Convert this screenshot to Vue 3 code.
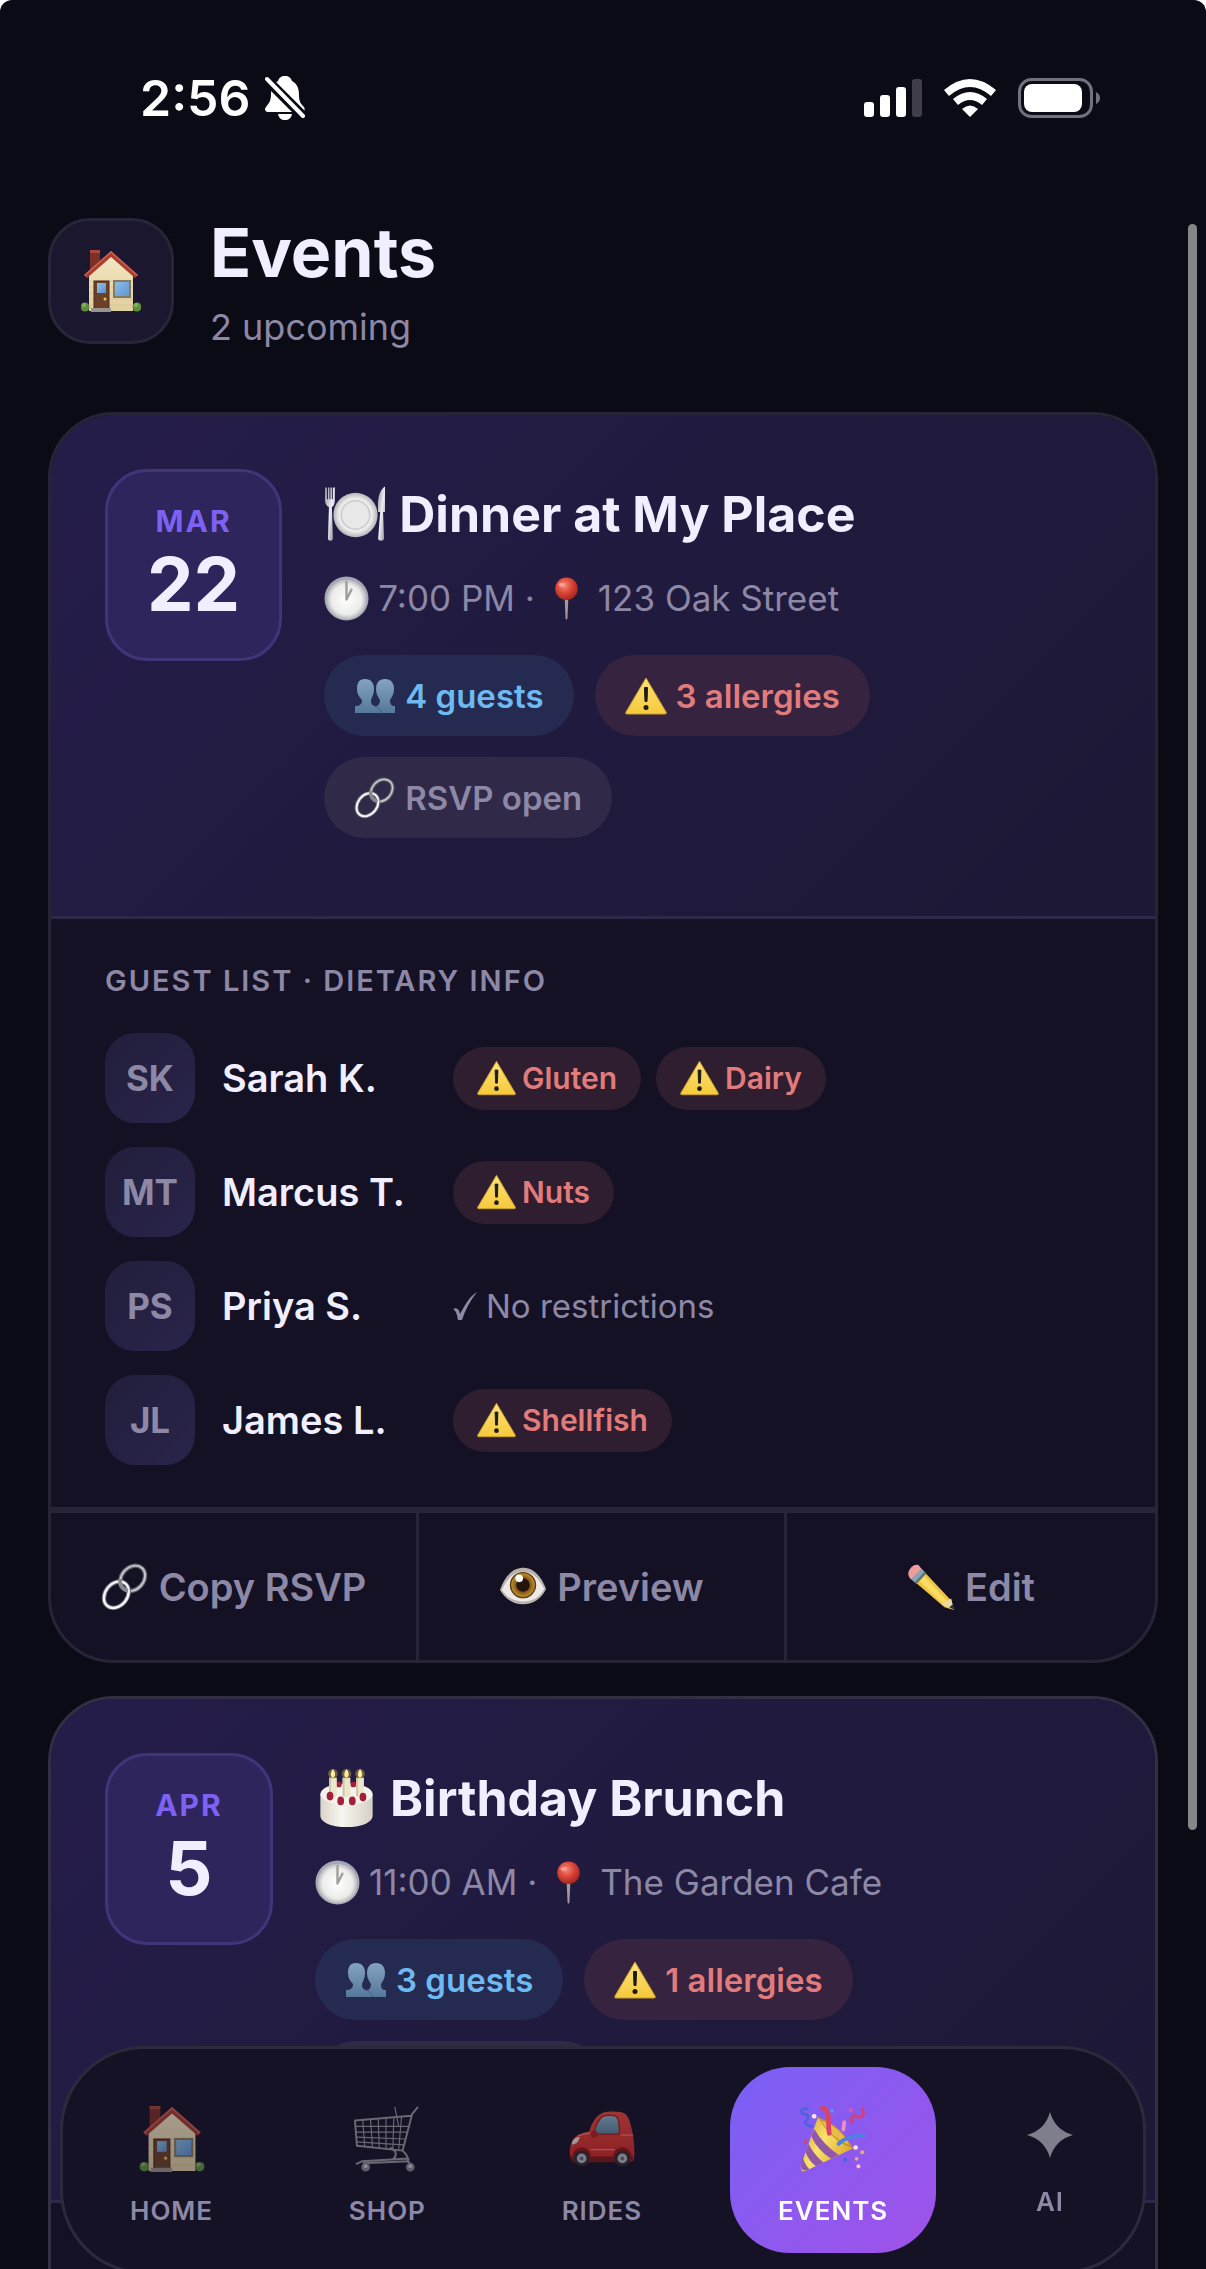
<template>
    <div class="phone">
        <svg class="defs" aria-hidden="true">
            <defs>
                <linearGradient id="g-wall" x1="0" y1="0" x2="0" y2="1">
                    <stop offset="0" stop-color="#f3e6c2" />
                    <stop offset="1" stop-color="#e2cf9f" />
                </linearGradient>
                <linearGradient id="g-glass" x1="0" y1="0" x2="1" y2="1">
                    <stop offset="0" stop-color="#8fc0e8" />
                    <stop offset="1" stop-color="#5b93cf" />
                </linearGradient>
                <linearGradient id="g-warn" x1="0" y1="0" x2="0" y2="1">
                    <stop offset="0" stop-color="#fbe27c" />
                    <stop offset="1" stop-color="#f6c93a" />
                </linearGradient>
                <linearGradient id="g-steel" x1="0" y1="0" x2="1" y2="1">
                    <stop offset="0" stop-color="#8c9099" />
                    <stop offset="0.5" stop-color="#eceef2" />
                    <stop offset="1" stop-color="#858992" />
                </linearGradient>
                <linearGradient id="g-people" x1="0" y1="0" x2="0" y2="1">
                    <stop offset="0" stop-color="#84a3bf" />
                    <stop offset="1" stop-color="#56789a" />
                </linearGradient>
                <radialGradient id="g-dial">
                    <stop offset="0" stop-color="#ffffff" />
                    <stop offset="0.75" stop-color="#ececea" />
                    <stop offset="1" stop-color="#b4b5ba" />
                </radialGradient>
                <radialGradient id="g-pin" cx="0.4" cy="0.35" r="0.7">
                    <stop offset="0" stop-color="#f58c7c" />
                    <stop offset="0.5" stop-color="#da4437" />
                    <stop offset="1" stop-color="#9d231c" />
                </radialGradient>
                <radialGradient id="g-iris">
                    <stop offset="0" stop-color="#5a3510" />
                    <stop offset="0.6" stop-color="#8a5a1a" />
                    <stop offset="1" stop-color="#c59a35" />
                </radialGradient>
                <linearGradient id="g-cake" x1="0" y1="0" x2="1" y2="0">
                    <stop offset="0" stop-color="#d9d4c8" />
                    <stop offset="0.4" stop-color="#f8f6f0" />
                    <stop offset="1" stop-color="#d5d0c3" />
                </linearGradient>
                <linearGradient id="g-car" x1="0" y1="0" x2="0" y2="1">
                    <stop offset="0" stop-color="#e5493e" />
                    <stop offset="1" stop-color="#cf2620" />
                </linearGradient>
                <linearGradient id="g-window" x1="0" y1="0" x2="0" y2="1">
                    <stop offset="0" stop-color="#8fb4c8" />
                    <stop offset="1" stop-color="#5d8399" />
                </linearGradient>
                <linearGradient id="g-cone" x1="0" y1="0" x2="1" y2="0.6">
                    <stop offset="0" stop-color="#c9972b" />
                    <stop offset="0.5" stop-color="#fbe36b" />
                    <stop offset="1" stop-color="#d9a72c" />
                </linearGradient>
            </defs>

            <symbol id="i-house" viewBox="0 0 60 62">
                <path d="M9 0h10v14L9 24z" fill="#7c2f25" />
                <path d="M9 0h10v3H9z" fill="#a8473a" />
                <path d="M8 25 30 4l22 21v36H8z" fill="url(#g-wall)" />
                <path d="M8 31h44M8 37h44M8 43h44M8 49h44M8 55h44" stroke="#d2c094" stroke-width="0.6" />
                <path d="M30 1 57 25l-3 3L30 7 6 28l-3-3z" fill="#a83d31" />
                <path d="M30 1 57 25l-1 1L30 3 4 26l-1-1z" fill="#cf6150" />
                <rect x="13" y="31" width="15" height="28" fill="#6b4027" stroke="#4a2a18" />
                <rect x="16" y="33" width="9" height="10" fill="url(#g-glass)" />
                <circle cx="24" cy="49" r="1.5" fill="#f0bf55" />
                <rect x="33" y="31" width="16" height="16" fill="url(#g-glass)" stroke="#857b5e" stroke-width="2" />
                <path d="M10 58h20v4H10z" fill="#9a9290" />
                <circle cx="4" cy="57" r="4.5" fill="#5f8f3d" />
                <circle cx="56" cy="57" r="4.5" fill="#5f8f3d" />
                <circle cx="3" cy="55" r="2" fill="#86b45a" />
                <circle cx="55" cy="55" r="2" fill="#86b45a" />
            </symbol>

            <symbol id="i-plate" viewBox="0 0 64 56">
                <path d="M1 1v13c0 4 2 6 4 7L4 53c0 3 5 3 5 0L8 21c2-1 3-3 3-7V1" fill="url(#g-steel)" />
                <path d="M3.500 0v13M6 0v13M8.500 0v13" stroke="#211b42" stroke-width="1" />
                <circle cx="32" cy="29" r="22.500" fill="url(#g-dial)" />
                <circle cx="32" cy="29" r="14.500" fill="#e8e8e8" stroke="#cbcbd0" stroke-width="1.500" />
                <path d="M62 0c-6 4-8 12-7 26h2l-2 27c0 3 6 3 6 0l-1-27h2z" fill="url(#g-steel)" />
            </symbol>

            <symbol id="i-cake" viewBox="0 0 60 62">
                <path d="M3 27v22c0 16 54 16 54 0V27z" fill="url(#g-cake)" />
                <ellipse cx="30" cy="27" rx="27" ry="11" fill="#f5f3ed" />
                <circle cx="22" cy="17" r="3" fill="#a51f38" />
                <circle cx="37" cy="17" r="3" fill="#a51f38" />
                <path d="M12 10h8v19c-2 2-6 2-8 0zM26 10h8v19c-2 2-6 2-8 0zM40 10h8v19c-2 2-6 2-8 0z" fill="#ece6cc" />
                <path d="M12 10h2v19h-2zM26 10h2v19h-2zM40 10h2v19h-2z" fill="#cdc5a4" />
                <g fill="#b8a33e">
                    <circle cx="16" cy="6" r="5" opacity="0.5" />
                    <circle cx="30" cy="6" r="5" opacity="0.5" />
                    <circle cx="44" cy="6" r="5" opacity="0.5" />
                </g>
                <path d="M16 1c3 4 3 8 0 9-3-1-3-5 0-9zM30 1c3 4 3 8 0 9-3-1-3-5 0-9zM44 1c3 4 3 8 0 9-3-1-3-5 0-9z" fill="#fdeea0" />
                <g fill="#a51f38">
                    <ellipse cx="13" cy="29" rx="3.500" ry="4.500" />
                    <ellipse cx="24" cy="34" rx="3.500" ry="4.500" />
                    <ellipse cx="36" cy="34" rx="3.500" ry="4.500" />
                    <ellipse cx="47" cy="30" rx="3.500" ry="4.500" />
                </g>
            </symbol>

            <symbol id="i-clock" viewBox="0 0 46 46">
                <circle cx="23" cy="23" r="22.500" fill="#a3a7b4" />
                <circle cx="23" cy="24" r="20.500" fill="url(#g-dial)" />
                <path d="M23 6v18l5-10" fill="none" stroke="#a0a19f" stroke-width="2.500" stroke-linecap="round" stroke-linejoin="round" />
            </symbol>

            <symbol id="i-pin" viewBox="0 0 46 46">
                <path d="M21 20h4l-1 23c0 2-2 2-2 0z" fill="#a59791" />
                <circle cx="23" cy="13" r="11.500" fill="url(#g-pin)" />
                <ellipse cx="18" cy="9" rx="3" ry="2" fill="#fbb5a8" opacity="0.7" />
            </symbol>

            <symbol id="i-people" viewBox="0 0 42 42">
                <g fill="url(#g-people)">
                    <path d="M11 4c6 0 9 4 9 10 0 5-2 8-3 11 0 4 1 6 6 6v7H1v-7c5 0 7-2 7-6-3-3-5-6-5-11C3 8 5 4 11 4z" />
                    <path d="M31 4c6 0 9 4 9 10 0 5-2 8-4 11 0 4 1 6 5 6v7H20v-5c4-2 6-4 6-8-2-3-4-6-4-11 0-6 3-10 9-10z" />
                </g>
                <path d="M20 31c4 1 6 3 8 7" fill="none" stroke="#435e7c" stroke-width="1" />
            </symbol>

            <symbol id="i-warn" viewBox="0 0 42 38">
                <path d="M21 1 41 35q1 2-1 2H2q-2 0-1-2z" fill="url(#g-warn)" stroke="#caa02b" stroke-width="1" stroke-linejoin="round" />
                <path d="M19.500 10.500h3l-0.500 14h-2z" fill="#1d1a12" stroke="#1d1a12" stroke-linejoin="round" />
                <circle cx="21" cy="30.500" r="2.500" fill="#1d1a12" />
            </symbol>

            <symbol id="i-link" viewBox="0 0 50 50">
                <g fill="none">
                    <ellipse cx="33" cy="16" rx="11.500" ry="14.500" transform="rotate(42 33 16)" stroke="#62656c" stroke-width="4.500" />
                    <ellipse cx="33" cy="16" rx="11.500" ry="14.500" transform="rotate(42 33 16)" stroke="#c3c6cc" stroke-width="2" />
                    <ellipse cx="16" cy="33" rx="11.500" ry="15" transform="rotate(38 16 33)" stroke="#6d7078" stroke-width="4.500" />
                    <ellipse cx="16" cy="33" rx="11.500" ry="15" transform="rotate(38 16 33)" stroke="#f2f4f8" stroke-width="2.500" />
                    <path d="M20 17c-1 6 2 10 8 12" stroke="#84878f" stroke-width="4" />
                </g>
            </symbol>

            <symbol id="i-eye" viewBox="0 0 50 50">
                <path d="M1 28C7 12 15 5 26 5c10 0 18 9 23 22-5 10-13 16-24 16C13 43 6 36 1 28z" fill="#b9b3ae" />
                <path d="M3 28C9 15 16 9 26 9c9 0 16 7 21 18-5 9-12 13-22 13C14 40 8 35 3 28z" fill="#eeeae6" />
                <circle cx="25" cy="23" r="13" fill="url(#g-iris)" />
                <circle cx="25" cy="23" r="13" fill="none" stroke="#5d3d12" stroke-width="1.500" />
                <circle cx="25" cy="23" r="7" fill="#24140b" />
                <circle cx="21" cy="16" r="4" fill="#fff" />
            </symbol>

            <symbol id="i-pencil" viewBox="0 0 50 50">
                <path d="M3 15 15 6l31 33 3 10-10-3z" fill="#f0c43c" />
                <path d="m9 15 6-5 29 32-4 3z" fill="#f9dc63" />
                <path d="M3 16 10 22 20 11 14 5z" fill="#8aa4b4" />
                <path d="M8 20 10 22 20 11 18 9z" fill="#5e7480" />
                <path d="M2 14C-1 9 6 0 12 2l3 4L4 17z" fill="#ee9d9a" />
                <path d="m36 43 10-6 3 12z" fill="#eed9a5" />
                <path d="m44 46 4-3 1 6z" fill="#2f2f33" />
            </symbol>

            <symbol id="i-cart" viewBox="0 0 66 68">
                <g fill="none" stroke="#96969e" stroke-width="1.200" stroke-linejoin="round">
                    <path d="M65 1 59 8 49 46 2 41 0 15l58-5" stroke-width="2" />
                    <path d="M1 21h55M1 27h53M2 32l50 2M2 37l48 3" />
                    <path d="m8 14 2 28M16 14l2 28M24 13l1 30M32 12v32M40 12l-1 33M48 11l-3 34M41 1l4 20" />
                    <path d="M36 43c8 3 7 9 3 12M49 46c6 5 6 8 5 11l5 4M1 60l6-3 48-3v3L8 59" stroke-width="2" />
                </g>
                <circle cx="11" cy="63" r="4.500" fill="#84848c" />
                <circle cx="57" cy="63" r="4.500" fill="#84848c" />
                <circle cx="11" cy="62" r="2" fill="#d0d0d4" />
                <circle cx="57" cy="62" r="2" fill="#d0d0d4" />
            </symbol>

            <symbol id="i-car" viewBox="0 0 68 68">
                <path d="M1 50c-1-8 2-16 8-20 4-2 8-3 12-4 2-7 5-14 12-18 4-3 20-3 25 0 5 5 6 13 8 22 1 8 2 18 1 24q0 3-3 3H6q-5-2-5-7z" fill="url(#g-car)" />
                <path d="M26 27c1-6 4-12 8-16 4-2 12-2 15 0 3 3 3 9 3 15 0 2-1 3-3 3H28q-3 0-2-2z" fill="url(#g-window)" stroke="#a91f1b" stroke-width="1.500" />
                <circle cx="26" cy="29" r="3.500" fill="#b3211c" />
                <path d="M9 31c5-2 9-3 13-3M54 30h12" fill="none" stroke="#f0766b" stroke-width="1.500" />
                <path d="M22 45h25" stroke="#f0766b" stroke-width="1.500" />
                <path d="M3 38c1-4 4-6 8-6-1 5-3 7-8 8z" fill="#f1d8d4" />
                <path d="M1 52h65v4q-1 2-4 2H5q-4-2-4-6z" fill="#7e1714" />
                <g>
                    <circle cx="13" cy="52" r="9.500" fill="#8f1714" />
                    <circle cx="55" cy="52" r="9.500" fill="#8f1714" />
                    <circle cx="13" cy="54" r="8" fill="#2d2d31" />
                    <circle cx="55" cy="54" r="8" fill="#2d2d31" />
                    <circle cx="13" cy="54" r="5" fill="#b5b7bd" />
                    <circle cx="55" cy="54" r="5" fill="#b5b7bd" />
                    <circle cx="13" cy="54" r="2" fill="#6b6d73" />
                    <circle cx="55" cy="54" r="2" fill="#6b6d73" />
                </g>
            </symbol>

            <symbol id="i-party" viewBox="0 0 70 70">
                <path d="M19 12Q40 24 56 45L8 68q-8 4-7-5z" fill="url(#g-cone)" />
                <path d="M15 24q9 16 26 28l-8 4Q18 46 12 32zM9 40q6 12 16 20l-8 4Q9 58 6 49zM3 55q2 7 7 12-9 4-9-4z" fill="#9258a8" />
                <path d="M19 12q24 8 37 33Q34 38 19 12z" fill="#c99322" />
                <path d="M22 15q22 8 30 26Q33 34 22 15z" fill="#e8bc45" />
                <path d="M31 29C29 18 33 5 24 2" fill="none" stroke="#dc4264" stroke-width="5" stroke-linecap="round" />
                <path d="M41 40c8-7 16-9 27-8" fill="none" stroke="#4a83e0" stroke-width="4" stroke-linecap="round" />
                <path d="M8 3C0 1 0 9 5 9s5 4 1 7 4 5 7 6" fill="none" stroke="#4466d8" stroke-width="2.500" stroke-linecap="round" />
                <path d="M66 3c4 8-3 11-6 8s-8 2-4 7" fill="none" stroke="#d0407c" stroke-width="3" stroke-linecap="round" />
                <path d="m47 17-1 8" stroke="#ee8ec0" stroke-width="4" stroke-linecap="round" />
                <circle cx="15" cy="11" r="2.500" fill="#fbe6ec" />
                <circle cx="34" cy="5" r="2" fill="#5599f0" />
                <circle cx="54" cy="4" r="2" fill="#e05a9e" />
                <circle cx="59" cy="44" r="2.500" fill="#fbe6d8" />
                <circle cx="66" cy="49" r="2.200" fill="#e8a878" />
                <circle cx="60" cy="56" r="2" fill="#e8a878" />
                <circle cx="62" cy="64" r="2.200" fill="#f6bcd4" />
                <circle cx="48" cy="57" r="2" fill="#4466d8" />
                <circle cx="6" cy="38" r="2.500" fill="#c04a8a" />
            </symbol>

            <symbol id="i-spark" viewBox="0 0 46 46">
                <path d="M23 0q5 18 23 23-18 5-23 23Q18 28 0 23 18 18 23 0z" fill="#b9b8c4" />
            </symbol>
        </svg>

        <div class="status-bar">
            <div class="status-left">
                <span class="time">2:56</span>
                <svg class="bell" viewBox="0 0 40 44">
                    <path d="M20 0c4 0 6 2 7 5 6 3 7 9 7 14 0 7 2 9 5 12 1 2 1 5-2 5H3c-3 0-4-3-2-5 3-4 5-6 5-13 0-6 2-10 7-13 1-3 3-5 7-5z" fill="#fff" />
                    <path d="M13 38h14c-1 4-3 6-7 6s-6-2-7-6z" fill="#fff" />
                    <path d="M2 4 38 40" stroke="#0b0b16" stroke-width="10" />
                    <path d="M2 3 38 40" stroke="#fff" stroke-width="4" stroke-linecap="round" />
                </svg>
            </div>
            <div class="status-right">
                <svg class="signal" viewBox="0 0 58 38">
                    <g fill="#fff">
                        <rect x="0" y="23" width="10" height="15" rx="3" />
                        <rect x="16" y="16" width="10" height="22" rx="3" />
                        <rect x="32" y="8" width="10" height="30" rx="3" />
                        <rect x="48" y="0" width="10" height="38" rx="3" fill="#403e4a" />
                    </g>
                </svg>
                <svg class="wifi" viewBox="0 0 52 38">
                    <path d="M0 11Q26-11 52 11l-5 6Q26-1 5 17z" fill="#fff" />
                    <path d="M9 20q17-14 34 0l-5 6q-12-10-24 0z" fill="#fff" />
                    <path d="M18 30q8-7 16 0l-8 8z" fill="#fff" />
                </svg>
                <svg class="battery" viewBox="0 0 83 40">
                    <rect x="1.500" y="1.500" width="72" height="37" rx="12" fill="none" stroke="#72717b" stroke-width="3" />
                    <rect x="6" y="6" width="58" height="28" rx="8" fill="#fff" />
                    <path d="M78 14q4 2 4 6t-4 6z" fill="#72717b" />
                </svg>
            </div>
        </div>

        <header class="page-header">
            <button class="home-btn" type="button" aria-label="Home">
                <svg class="home-icon"><use href="#i-house" /></svg>
            </button>
            <div>
                <h1>Events</h1>
                <p class="subtitle">{{ events.length }} upcoming</p>
            </div>
        </header>

        <main class="event-list">
            <article v-for="event in events" :key="event.title" class="card" :class="{ 'card-raised': event.raised }">
                <div class="hero">
                    <div class="date">
                        <span class="month">{{ event.month }}</span>
                        <span class="day">{{ event.day }}</span>
                    </div>
                    <div class="info">
                        <h2>
                            <svg class="title-icon"><use :href="event.icon" /></svg>
                            <span>{{ event.title }}</span>
                        </h2>
                        <p class="meta">
                            <svg class="meta-icon"><use href="#i-clock" /></svg>
                            <span>{{ event.time }} ·</span>
                            <svg class="meta-icon"><use href="#i-pin" /></svg>
                            <span>{{ event.place }}</span>
                        </p>
                        <div class="chips">
                            <span class="chip chip-blue">
                                <svg class="chip-icon"><use href="#i-people" /></svg>
                                {{ event.guestCount }} guests
                            </span>
                            <span class="chip chip-red">
                                <svg class="chip-icon"><use href="#i-warn" /></svg>
                                {{ event.allergies }} allergies
                            </span>
                            <span class="chip chip-muted">
                                <svg class="chip-icon"><use href="#i-link" /></svg>
                                RSVP open
                            </span>
                        </div>
                    </div>
                </div>

                <section class="guests">
                    <template v-if="event.guests.length">
                        <h3>Guest list · Dietary info</h3>
                        <ul>
                            <li v-for="guest in event.guests" :key="guest.name">
                                <span class="avatar">{{ guest.initials }}</span>
                                <span class="guest-name">{{ guest.name }}</span>
                                <span v-if="guest.diet.length" class="diet">
                                    <span v-for="item in guest.diet" :key="item" class="tag">
                                        <svg class="tag-icon"><use href="#i-warn" /></svg>
                                        {{ item }}
                                    </span>
                                </span>
                                <span v-else class="no-diet">
                                    <svg class="check" viewBox="0 0 24 28">
                                        <path d="M0 17c4-2 6 0 7 5C12 13 16 5 24 0 17 9 12 18 9 28H5C4 22 3 19 0 17z" fill="#8c88a6" />
                                    </svg>
                                    No restrictions
                                </span>
                            </li>
                        </ul>
                    </template>
                </section>

                <div v-if="event.guests.length" class="actions">
                    <button v-for="action in actions" :key="action.label" type="button">
                        <svg class="action-icon"><use :href="action.icon" /></svg>
                        {{ action.label }}
                    </button>
                </div>
            </article>
        </main>

        <div class="scrollbar"></div>

        <nav class="tab-bar">
            <button
                v-for="tab in tabs"
                :key="tab.label"
                type="button"
                class="tab"
                :class="[tab.kind, { active: current === tab.label }]"
                @click="current = tab.label"
            >
                <span class="tab-icon"><svg><use :href="tab.icon" /></svg></span>
                <span class="tab-label">{{ tab.label }}</span>
            </button>
        </nav>
    </div>
</template>

<script setup>
import { ref } from 'vue';

const current = ref('EVENTS');

const events = [
    {
        title: 'Dinner at My Place',
        icon: '#i-plate',
        month: 'MAR',
        day: 22,
        time: '7:00 PM',
        place: '123 Oak Street',
        guestCount: 4,
        allergies: 3,
        raised: false,
        guests: [
            { initials: 'SK', name: 'Sarah K.', diet: ['Gluten', 'Dairy'] },
            { initials: 'MT', name: 'Marcus T.', diet: ['Nuts'] },
            { initials: 'PS', name: 'Priya S.', diet: [] },
            { initials: 'JL', name: 'James L.', diet: ['Shellfish'] }
        ]
    },
    {
        title: 'Birthday Brunch',
        icon: '#i-cake',
        month: 'APR',
        day: 5,
        time: '11:00 AM',
        place: 'The Garden Cafe',
        guestCount: 3,
        allergies: 1,
        raised: true,
        guests: []
    }
];

const actions = [
    { label: 'Copy RSVP', icon: '#i-link' },
    { label: 'Preview', icon: '#i-eye' },
    { label: 'Edit', icon: '#i-pencil' }
];

const tabs = [
    { label: 'HOME', icon: '#i-house', kind: 'emoji' },
    { label: 'SHOP', icon: '#i-cart', kind: 'emoji' },
    { label: 'RIDES', icon: '#i-car', kind: 'emoji' },
    { label: 'EVENTS', icon: '#i-party', kind: 'emoji' },
    { label: 'AI', icon: '#i-spark', kind: 'glyph' }
];
</script>

<style>
body {
    margin: 0;
    background: #fff;
}
</style>

<style scoped>
.phone {
    position: relative;
    height: 100vh;
    overflow: hidden;
    box-sizing: border-box;
    border-radius: 12px 12px 0 0;
    background: #0b0b16;
    color: #f0eeff;
    font-family: Inter, "Liberation Sans", sans-serif;
}

.phone *,
.phone *::before {
    box-sizing: border-box;
}

.defs {
    position: absolute;
    width: 0;
    height: 0;
}

svg {
    display: block;
    flex: none;
}

button {
    margin: 0;
    padding: 0;
    border: 0;
    background: none;
    font-family: inherit;
    cursor: pointer;
}

h1,
h2,
h3,
p,
ul {
    margin: 0;
    padding: 0;
}

/* status bar */
.status-bar {
    display: flex;
    align-items: center;
    justify-content: space-between;
    height: 196px;
    padding: 0 105px 0 140px;
    color: #fff;
}

.status-left,
.status-right {
    display: flex;
    align-items: center;
}

.status-left {
    gap: 14px;
}

.status-right {
    gap: 22px;
}

.time {
    font-size: 50px;
    font-weight: 600;
    line-height: 60px;
}

.bell {
    width: 40px;
    height: 44px;
}

.signal {
    width: 58px;
    height: 38px;
}

.wifi {
    width: 52px;
    height: 38px;
}

.battery {
    width: 83px;
    height: 40px;
}

/* page header */
.page-header {
    display: flex;
    align-items: center;
    gap: 36px;
    padding: 14px 48px 61px;
}

.home-btn {
    display: grid;
    place-items: center;
    width: 126px;
    height: 126px;
    border: 3px solid #272539;
    border-radius: 42px;
    background: #1a172f;
}

.home-icon {
    width: 60px;
    height: 62px;
}

h1 {
    font-size: 68px;
    font-weight: 700;
    line-height: 84px;
}

.subtitle {
    margin-top: 9px;
    color: #8c88a6;
    font-size: 36px;
    line-height: 48px;
}

/* event cards */
.event-list {
    display: flex;
    flex-direction: column;
    gap: 33px;
    padding: 0 48px;
}

.card {
    flex: none;
    overflow: hidden;
    border: 3px solid #262436;
    border-radius: 66px;
    background: #141125;
}

.card-raised {
    border-color: #322e44;
}

.hero {
    display: flex;
    align-items: flex-start;
    gap: 42px;
    padding: 54px 54px 78px;
    border-bottom: 3px solid #2e2949;
    background: linear-gradient(135deg, #251d4a 0%, #201a3e 50%, #1d1835 100%);
}

.date {
    display: flex;
    flex: none;
    flex-direction: column;
    align-items: center;
    min-width: 168px;
    padding: 30px 39px;
    border: 3px solid #41357a;
    border-radius: 42px;
    background: #2e255c;
}

.month {
    color: #7c61f2;
    font-size: 30px;
    font-weight: 700;
    letter-spacing: 2px;
    line-height: 39px;
}

.day {
    font-size: 74px;
    font-weight: 700;
    line-height: 87px;
}

.info {
    flex: 1;
    min-width: 0;
    padding-top: 15px;
}

h2 {
    display: flex;
    align-items: center;
    gap: 12px;
    font-size: 50px;
    font-weight: 700;
    line-height: 60px;
}

.title-icon {
    width: 63px;
    height: 60px;
}

.meta {
    display: flex;
    align-items: center;
    gap: 9px;
    margin-top: 30px;
    color: #8c88a6;
    font-size: 35px;
    line-height: 48px;
}

.meta-icon {
    width: 45px;
    height: 45px;
}

.chips {
    display: flex;
    flex-wrap: wrap;
    gap: 21px;
    margin-top: 33px;
}

.chip {
    display: flex;
    align-items: center;
    gap: 9px;
    height: 81px;
    padding: 0 30px;
    border-radius: 42px;
    font-size: 33px;
    font-weight: 600;
}

.chip-icon {
    width: 42px;
    height: 42px;
}

.chip-blue {
    background: #252a50;
    color: #6dbaf3;
}

.chip-red {
    background: #35233f;
    color: #e27b7b;
}

.chip-muted {
    background: #302948;
    color: #8c88a6;
}

/* guest list */
.guests {
    min-height: 156px;
    padding: 42px 54px;
    border-bottom: 3px solid #262436;
}

h3 {
    color: #8c88a6;
    font-size: 29px;
    font-weight: 600;
    letter-spacing: 2px;
    line-height: 39px;
    text-transform: uppercase;
}

ul {
    display: flex;
    flex-direction: column;
    gap: 24px;
    margin-top: 33px;
    list-style: none;
}

li {
    display: flex;
    align-items: center;
    gap: 27px;
}

.avatar {
    display: grid;
    flex: none;
    place-items: center;
    width: 90px;
    height: 90px;
    border-radius: 30px;
    background: linear-gradient(135deg, #221e3b, #29244a);
    color: #8c88a6;
    font-size: 35px;
    font-weight: 700;
}

.guest-name {
    min-width: 204px;
    font-size: 38px;
    font-weight: 600;
}

.diet {
    display: flex;
    flex-wrap: wrap;
    gap: 15px;
}

.tag {
    display: flex;
    align-items: center;
    gap: 6px;
    height: 63px;
    padding: 0 24px;
    border-radius: 32px;
    background: #2e1e2f;
    color: #e27b7b;
    font-size: 30px;
    font-weight: 600;
}

.tag-icon {
    width: 39px;
    height: 36px;
}

.no-diet {
    display: flex;
    align-items: center;
    gap: 9px;
    color: #8c88a6;
    font-size: 33px;
}

.check {
    width: 24px;
    height: 28px;
}

/* card actions */
.actions {
    display: grid;
    grid-template-columns: repeat(3, 1fr);
    border-top: 3px solid #262436;
}

.actions button {
    display: flex;
    align-items: center;
    justify-content: center;
    gap: 10px;
    height: 147px;
    border-right: 3px solid #262436;
    color: #8c88a6;
    font-size: 38px;
    font-weight: 600;
}

.actions button:last-child {
    border-right: 0;
}

.action-icon {
    width: 48px;
    height: 48px;
}

/* overlay scrollbar thumb */
.scrollbar {
    position: absolute;
    top: 224px;
    right: 9px;
    width: 9px;
    height: 1606px;
    border-radius: 5px;
    background: #868588;
}

/* floating tab bar, it runs slightly past the bottom edge */
.tab-bar {
    position: fixed;
    right: 60px;
    bottom: -5px;
    left: 60px;
    display: flex;
    align-items: flex-start;
    justify-content: space-between;
    padding: 18px 19px;
    border: 3px solid #2c2a3a;
    border-radius: 84px;
    background: #151225;
}

.tab {
    display: flex;
    flex-direction: column;
    align-items: center;
    gap: 18px;
    padding: 36px 48px 24px;
    border-radius: 60px;
    color: #8c88a6;
}

.tab-icon {
    display: grid;
    place-items: center;
    height: 72px;
    opacity: 0.65;
}

.tab-icon svg {
    width: 66px;
    height: 66px;
}

.tab.glyph {
    padding-right: 51px;
    padding-left: 51px;
}

.glyph .tab-icon {
    height: 63px;
}

.glyph .tab-icon svg {
    width: 46px;
    height: 46px;
}

.tab-label {
    font-size: 26px;
    font-weight: 600;
    letter-spacing: 1px;
    line-height: 36px;
}

.tab.active {
    background: linear-gradient(135deg, #7960f6, #a052e8);
    color: #fff;
}

.tab.active .tab-icon {
    opacity: 1;
}
</style>
